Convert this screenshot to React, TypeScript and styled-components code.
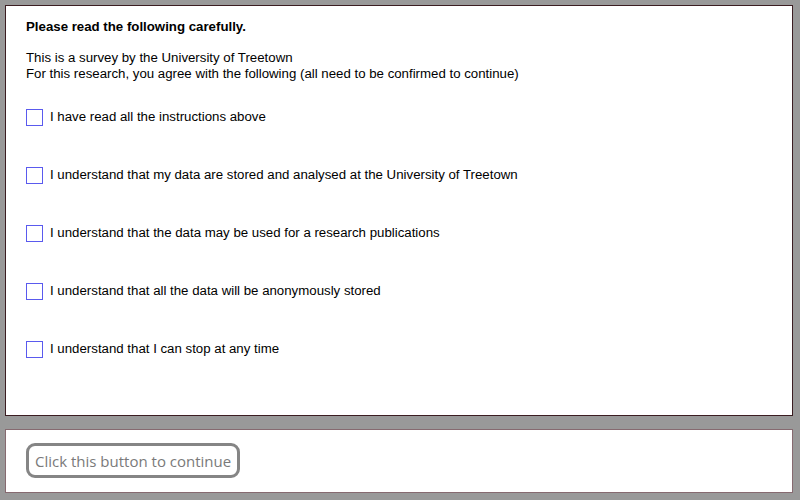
import React, { useState } from 'react'
import styled, { createGlobalStyle } from 'styled-components'

const GlobalStyle = createGlobalStyle`
  html, body {
    margin: 0;
    padding: 0;
    background: #999999;
  }
  body {
    padding: 5px 7px 8px 5px;
    font-family: 'Liberation Sans', Arial, sans-serif;
  }
`

const Panel = styled.div<{ $soft?: boolean }>`
  background: #ffffff;
  border: 1px solid ${(p) => (p.$soft ? '#866a70' : '#3b1d22')};
`

const Consent = styled(Panel)`
  padding: 13px 20px 57px 20px;
  color: #000;
  font-size: 13.25px;
  line-height: 16px;
`

const Heading = styled.div`
  font-weight: bold;
`

const Intro = styled.p`
  margin: 15px 0 26px 0;
`

const Options = styled.div`
  display: flex;
  flex-direction: column;
  gap: 40px;
`

const Option = styled.label`
  display: flex;
  align-items: center;
  gap: 7px;
  height: 18px;
  cursor: pointer;
`

const Box = styled.span<{ $checked: boolean }>`
  width: 15px;
  height: 15px;
  border: 1px solid #5a5aee;
  background: ${(p) => (p.$checked ? '#5a5aee' : '#fff')};
  flex-shrink: 0;
`

const Footer = styled(Panel)`
  margin-top: 13px;
  padding: 13px 20px 14px 20px;
`

const ContinueButton = styled.button`
  font-family: 'Open Sans', 'Noto Sans', sans-serif;
  font-size: 15px;
  color: #7a7a7a;
  background: #fff;
  border: 3px solid #858585;
  border-radius: 9px;
  height: 35px;
  padding: 0 6px;
  cursor: pointer;
`

const items = [
  'I have read all the instructions above',
  'I understand that my data are stored and analysed at the University of Treetown',
  'I understand that the data may be used for a research publications',
  'I understand that all the data will be anonymously stored',
  'I understand that I can stop at any time',
]

export default function App() {
  const [checked, setChecked] = useState<boolean[]>(items.map(() => false))

  return (
    <>
      <GlobalStyle />
      <Consent>
        <Heading>Please read the following carefully.</Heading>
        <Intro>
          This is a survey by the University of Treetown
          <br />
          For this research, you agree with the following (all need to be confirmed to continue)
        </Intro>
        <Options>
          {items.map((text, i) => (
            <Option
              key={i}
              onClick={() => setChecked(checked.map((c, j) => (j === i ? !c : c)))}
            >
              <Box $checked={checked[i]} />
              <span>{text}</span>
            </Option>
          ))}
        </Options>
      </Consent>
      <Footer $soft>
        <ContinueButton>Click this button to continue</ContinueButton>
      </Footer>
    </>
  )
}
